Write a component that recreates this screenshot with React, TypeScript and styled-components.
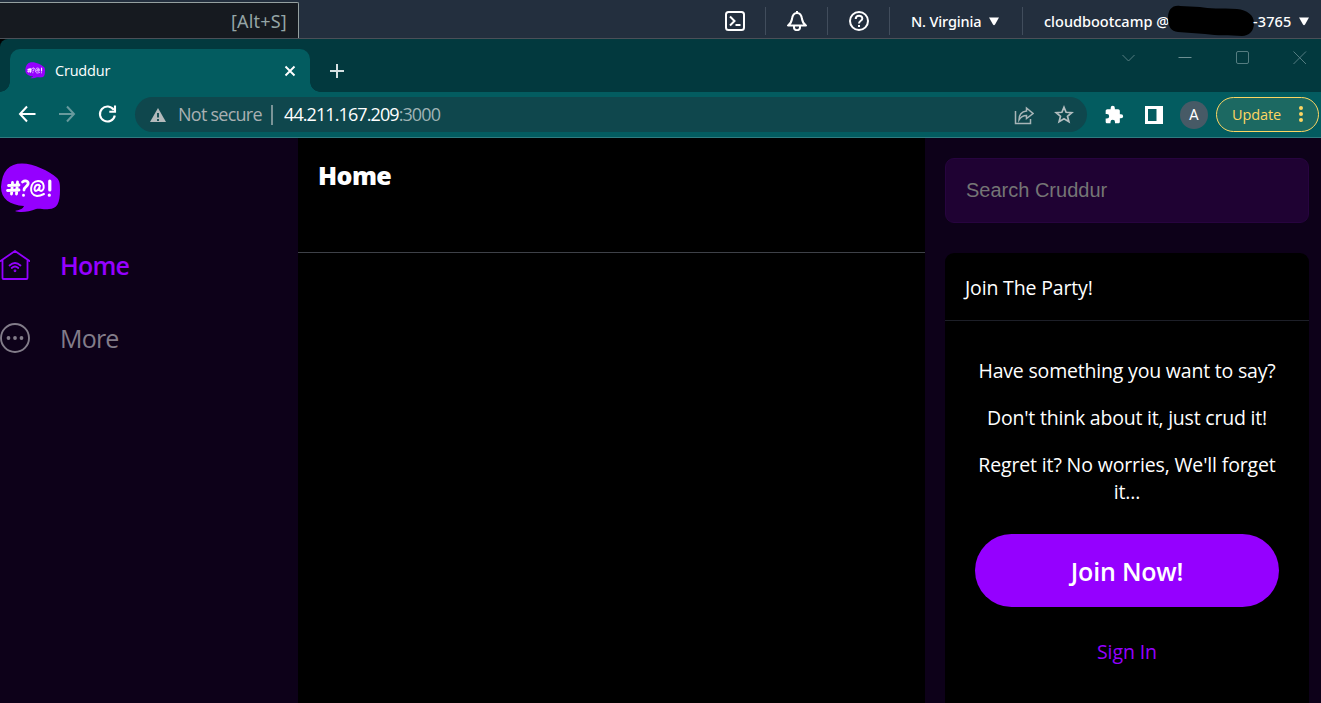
import React from 'react';
import styled, { createGlobalStyle } from 'styled-components';

const GlobalStyle = createGlobalStyle`
  * { box-sizing: border-box; }
  body {
    margin: 0;
    background: #000;
    font-family: 'Open Sans', 'Noto Sans', sans-serif;
    overflow: hidden;
  }
  svg { display: block; flex: none; }
`;

const Screen = styled.div`
  width: 1321px;
  height: 703px;
  display: flex;
  flex-direction: column;
  overflow: hidden;
`;

/* Cloud console bar */
const ConsoleBar = styled.header`
  height: 39px;
  flex: none;
  display: flex;
  align-items: stretch;
  background: #232f3e;
  border-bottom: 1px solid #4b5058;
  color: #fff;
`;

const ConsoleSearch = styled.div`
  width: 299px;
  margin-top: 2px;
  display: flex;
  align-items: center;
  justify-content: flex-end;
  padding: 0 11px 0 0;
  background: #161a20;
  border: solid #95a0a0;
  border-width: 1px 1px 0 0;
  border-top-right-radius: 2px;
  color: #95a5a6;
  font-family: 'Noto Sans', sans-serif;
  font-size: 18px;
  letter-spacing: 0.2px;
`;

const ConsoleIcons = styled.div`
  margin-left: auto;
  display: flex;
  align-items: center;
  padding-top: 4px;
`;

const ConsoleCell = styled.div<{ $w: number; $pad?: number }>`
  width: ${p => p.$w}px;
  height: 28px;
  display: flex;
  align-items: center;
  justify-content: ${p => (p.$pad ? 'flex-start' : 'center')};
  padding-left: ${p => p.$pad ?? 0}px;
  border-right: 1px solid #414d5c;
  font-family: 'Noto Sans', sans-serif;
  font-weight: 500;
  font-size: 14.5px;
  white-space: nowrap;
  &:last-child { border-right: 0; }
`;

const ConsoleLabel = styled.span<{ $w: number; $ls: number }>`
  width: ${p => p.$w}px;
  letter-spacing: ${p => p.$ls}px;
  padding-bottom: 1px;
`;

const Redaction = styled.svg`
  margin: 0 -2px 0 0;
`;

/* Browser window */
const TabStrip = styled.div`
  height: 53px;
  flex: none;
  display: flex;
  align-items: flex-end;
  background: #02393e;
  border-top-left-radius: 8px;
`;

const TabCurve = styled.div<{ $side: 'left' | 'right' }>`
  width: 10px;
  height: 10px;
  background: radial-gradient(circle at ${p => (p.$side === 'left' ? '0 0' : '100% 0')}, transparent 9.5px, #035c60 10px);
`;

const Tab = styled.div`
  width: 300px;
  height: 43px;
  display: flex;
  align-items: center;
  padding: 0 14px 0 15px;
  background: #035c60;
  border-radius: 10px 10px 0 0;
  color: #fff;
`;

const TabTitle = styled.span`
  flex: 1;
  margin-left: 10px;
  font-size: 14.5px;
  letter-spacing: -0.2px;
`;

const NewTab = styled.div`
  height: 43px;
  display: flex;
  align-items: center;
  margin-left: 9px;
`;

const WindowControls = styled.div`
  height: 53px;
  margin-left: auto;
  display: flex;
  gap: 42px;
  padding: 12px 14px 0 0;
`;

const Toolbar = styled.div`
  height: 46px;
  flex: none;
  display: flex;
  align-items: center;
  background: #035c60;
  border-bottom: 1px solid #2f7b80;
`;

const NavButtons = styled.div`
  width: 135px;
  display: flex;
  gap: 20px;
  padding: 0 0 2px 17px;
`;

const AddressBar = styled.div`
  width: 952px;
  height: 35px;
  display: flex;
  align-items: center;
  padding: 0 13px 0 14px;
  border-radius: 18px;
  background: #0f474d;
  font-size: 18px;
  color: #9fb3b5;
`;

const Security = styled.span`
  margin-left: 11px;
  width: 93px;
  padding-bottom: 1px;
  white-space: nowrap;
  letter-spacing: -0.75px;
  color: #a9b0b2;
`;

const Separator = styled.span`
  width: 2px;
  height: 20px;
  background: #7a9497;
  margin-right: 11px;
`;

const Url = styled.span`
  flex: 1;
  padding-bottom: 1px;
  letter-spacing: -0.91px;
`;

const Host = styled.span`
  color: #fff;
`;

const AddressActions = styled.div`
  display: flex;
  gap: 20px;
`;

const Extensions = styled.div`
  display: flex;
  align-items: center;
  margin-left: 17px;
`;

const PanelIcon = styled.svg`
  margin-left: 21px;
`;

const Avatar = styled.div`
  width: 28px;
  height: 28px;
  margin-left: 17px;
  border-radius: 50%;
  background: #475a66;
  color: #fff;
  font: 400 15px Roboto, sans-serif;
  display: flex;
  align-items: center;
  justify-content: center;
`;

const UpdateButton = styled.div`
  width: 103px;
  height: 35px;
  margin-left: 8px;
  padding: 0 15px 1px 15px;
  display: flex;
  align-items: center;
  justify-content: space-between;
  border: 1px solid #fdd663;
  border-radius: 18px;
  background: #1c6962;
  color: #fdd663;
  font-size: 14.5px;
  letter-spacing: -0.1px;
`;

/* Cruddur page */
const Page = styled.div`
  flex: 1;
  display: flex;
  min-height: 0;
`;

const Sidebar = styled.nav`
  width: 298px;
  padding-top: 25px;
  background: #0d0119;
`;

const Logo = styled.svg`
  margin: 0;
`;

const NavList = styled.div`
  padding-top: 35px;
`;

const NavItem = styled.a<{ $active?: boolean; $ls: number }>`
  display: flex;
  align-items: center;
  gap: 30px;
  height: 34px;
  margin-bottom: 39px;
  color: ${p => (p.$active ? '#9500ff' : '#827c89')};
  font-size: 25px;
  font-weight: ${p => (p.$active ? 600 : 400)};
  letter-spacing: ${p => p.$ls}px;
`;

const Feed = styled.main`
  width: 627px;
  background: #000;
`;

const FeedHeader = styled.div`
  height: 115px;
  padding: 19px 20px;
  border-bottom: 1px solid #3e4148;
  color: #fff;
  font-size: 25px;
  font-weight: 800;
  line-height: 36px;
  letter-spacing: -0.6px;
`;

const Aside = styled.section`
  width: 396px;
  padding: 20px 12px 0 20px;
  background: #0d0119;
  display: flex;
  flex-direction: column;
`;

const SearchBox = styled.input`
  width: 364px;
  height: 65px;
  flex: none;
  padding: 0 20px;
  border: 1px solid #27043f;
  border-radius: 9px;
  background: #1f0233;
  color: #fff;
  font: 20px 'Liberation Sans', Arial, sans-serif;
  outline: none;
  &::placeholder { color: #757575; opacity: 1; }
`;

const Card = styled.div`
  flex: 1;
  margin-top: 30px;
  border-radius: 9px 9px 0 0;
  background: #000;
  color: #fff;
  font-size: 19.5px;
`;

const CardHeader = styled.div`
  height: 68px;
  padding: 0 20px;
  line-height: 70px;
  border-bottom: 1px solid #1d1f28;
  letter-spacing: -0.16px;
`;

const CardBody = styled.div`
  padding: 36px 30px 0;
  text-align: center;
`;

const Line = styled.p<{ $ls: number }>`
  margin: 0 -10px 20px;
  line-height: 27px;
  letter-spacing: ${p => p.$ls}px;
`;

const JoinButton = styled.button`
  display: block;
  width: 304px;
  height: 73px;
  margin: 29px 0 31px;
  padding: 1px 0 0;
  border: 0;
  border-radius: 37px;
  background: #9500ff;
  color: #fff;
  font: 600 25px 'Open Sans', sans-serif;
  letter-spacing: -0.2px;
`;

const SignIn = styled.a`
  color: #9500ff;
  line-height: 27px;
  letter-spacing: -0.1px;
`;

const LogoMark = ({ size }: { size: number }) => (
  <Logo width={size} height={(size * 50) / 60} viewBox="0 0 60 50">
    <path
      d="M1 24C2 8 9 0.500 22 0.500C34 0.500 49 8 57 15C60 18 60 22 60 27C60 40 57 46 49 46C44 47 40 45 36 46C29 49 20 50 15 48C19 47 23 46 24 43C10 42 1 36 1 24Z"
      fill="#9500ff"
    />
    <g stroke="#fff" strokeWidth="2.800" fill="none" strokeLinecap="round" strokeLinejoin="round">
      <path d="M12.500 19.500L11.500 31M17.500 19L16.500 31M8.500 22.500L19 22M7.500 27.500L19 27" />
      <path d="M22.500 19C25 17 29 18 28 21C27 24 24 24 24 27M23.500 32.200V32.400" />
      <path d="M49.800 18V27M49.300 32V32.200" strokeWidth="3.200" />
    </g>
    <path
      d="M39 22C35 20 33 28 36 28C38 28 40 24 40 22C39 26 39 28 41 28C45 27 45 18 38 18C30 18 28 32 37 33C40 33 42 32 44 31"
      stroke="#fff"
      strokeWidth="2"
      fill="none"
      strokeLinecap="round"
    />
  </Logo>
);

const Caret = () => (
  <svg width="10" height="9" viewBox="0 0 10 9"><path d="M0 0.500H10L6 7.500Q5 9 4 7.500Z" fill="#fff" /></svg>
);

export default function App() {
  return (
    <Screen>
      <GlobalStyle />
      <ConsoleBar>
        <ConsoleSearch>[Alt+S]</ConsoleSearch>
        <ConsoleIcons>
          <ConsoleCell $w={62}>
            <svg width="20" height="20" viewBox="0 0 20 20" fill="none" stroke="#fff" strokeWidth="2">
              <rect x="1" y="1" width="18" height="18" rx="2.500" />
              <path d="M5 5.500L9.500 10L5 14.500M10.500 14H15.500" />
            </svg>
          </ConsoleCell>
          <ConsoleCell $w={62}>
            <svg width="20" height="20" viewBox="0 0 20 20" fill="none" stroke="#fff" strokeWidth="2">
              <path d="M10 0V2M1 14.500H19C16 12.500 15.500 11 15 8C14.500 4 13 2 10 2C7 2 5.500 4 5 8C4.500 11 4 12.500 1 14.500Z" strokeLinejoin="round" />
              <path d="M7 15V16.500C7 20 13 20 13 16.500V15" />
            </svg>
          </ConsoleCell>
          <ConsoleCell $w={62}>
            <svg width="20" height="20" viewBox="0 0 20 20" fill="none" stroke="#fff" strokeWidth="2">
              <circle cx="10" cy="10" r="9" />
              <path d="M6.700 8C6.700 3.500 13.300 3.700 13.300 7.500C13.300 10 10 9.500 10 12.500M10 14V16" />
            </svg>
          </ConsoleCell>
          <ConsoleCell $w={133} $pad={21}>
            <ConsoleLabel $w={78} $ls={-0.15}>N. Virginia</ConsoleLabel>
            <Caret />
          </ConsoleCell>
          <ConsoleCell $w={298} $pad={21}>
            <ConsoleLabel $w={124} $ls={0}>cloudbootcamp @</ConsoleLabel>
            <Redaction width="87" height="32" viewBox="0 0 87 32">
              <path d="M0 13C0 5 4 0 12 1L32 2C41 4 53 3 69 4C79 5 86 10 86 18C86 26 81 31 74 31C61 30 50 31 37 29L10 27C3 26 0 22 0 13Z" fill="#000" />
            </Redaction>
            <ConsoleLabel $w={46} $ls={0.1}>-3765</ConsoleLabel>
            <Caret />
          </ConsoleCell>
        </ConsoleIcons>
      </ConsoleBar>

      <TabStrip>
        <TabCurve $side="left" />
        <Tab>
          <LogoMark size={20} />
          <TabTitle>Cruddur</TabTitle>
          <svg width="12" height="12" viewBox="0 0 12 12" stroke="#fff" strokeWidth="1.900"><path d="M1.500 1.500L10.500 10.500M10.500 1.500L1.500 10.500" /></svg>
        </Tab>
        <TabCurve $side="right" />
        <NewTab>
          <svg width="16" height="16" viewBox="0 0 16 16" stroke="#d5e0e1" strokeWidth="2"><path d="M8 1V15M1 8H15" /></svg>
        </NewTab>
        <WindowControls>
          <svg width="15" height="15" viewBox="0 0 15 15" fill="none" stroke="#557d81"><path d="M1.500 4L7.500 10L13.500 4" /></svg>
          <svg width="15" height="15" viewBox="0 0 15 15" fill="none" stroke="#6d8f92"><path d="M0.500 6.500H13.500" /></svg>
          <svg width="15" height="15" viewBox="0 0 15 15" fill="none" stroke="#557d81"><rect x="1.500" y="0.500" width="12" height="12" rx="1.500" /></svg>
          <svg width="15" height="15" viewBox="0 0 15 15" fill="none" stroke="#557d81"><path d="M1.500 0.500L14 13M14 0.500L1.500 13" /></svg>
        </WindowControls>
      </TabStrip>

      <Toolbar>
        <NavButtons>
          <svg width="20" height="20" viewBox="0 0 20 20" fill="none" stroke="#fff" strokeWidth="2"><path d="M18.500 10H3M10 2.500L3 10L10 17.500" /></svg>
          <svg width="20" height="20" viewBox="0 0 20 20" fill="none" stroke="#689a9d" strokeWidth="2"><path d="M2 10H17M10 2.500L17 10L10 17.500" /></svg>
          <svg width="20" height="20" viewBox="0 0 20 20" fill="none" stroke="#fff" strokeWidth="2.100"><path d="M16.800 6A7.500 7.500 0 1 0 17.800 11.500M12.300 7.800H18V1.500" /></svg>
        </NavButtons>
        <AddressBar>
          <svg width="18" height="18" viewBox="0 0 18 18"><path d="M9 2L17 16H1Z" fill="#b4babc" /><path d="M9 7V11.500M9 13V15" stroke="#0f474d" strokeWidth="1.800" /></svg>
          <Security>Not secure</Security>
          <Separator />
          <Url><Host>44.211.167.209</Host>:3000</Url>
          <AddressActions>
            <svg width="20" height="20" viewBox="0 0 20 20" fill="none" stroke="#a7b5b7" strokeWidth="1.500">
              <path d="M1.500 6V18.500H16.500V14M12.500 3L19 8.500L12.500 13.500V10.500C9 10.500 7 11.500 5 15C5 9 8 6.500 12.500 6Z" />
            </svg>
            <svg width="20" height="20" viewBox="0 0 20 20" fill="none" stroke="#b3bec0" strokeWidth="1.700">
              <path d="M10 2.300L12.100 7.300L17.800 7.700L13.500 11.300L14.900 16.800L10 13.800L5.100 16.800L6.500 11.300L2.200 7.700L7.900 7.300Z" />
            </svg>
          </AddressActions>
        </AddressBar>
        <Extensions>
          <svg width="20" height="20" viewBox="0 0 24 24"><path d="M20.500 11H19V7c0-1.100-.9-2-2-2h-4V3.500a2.500 2.500 0 0 0-5 0V5H4c-1.100 0-2 .9-2 2v3.800h1.500a2.700 2.700 0 0 1 0 5.400H2V20c0 1.100.9 2 2 2h3.800v-1.500a2.700 2.700 0 0 1 5.400 0V22H17c1.100 0 2-.9 2-2v-4h1.500a2.500 2.500 0 0 0 0-5Z" fill="#fff" /></svg>
          <PanelIcon width="18" height="18" viewBox="0 0 18 18"><path fillRule="evenodd" d="M0 0H18V18H0ZM3 3V15H11.500V3Z" fill="#fff" /></PanelIcon>
          <Avatar>A</Avatar>
          <UpdateButton>
            Update
            <svg width="4" height="18" viewBox="0 0 4 18" fill="#fdd663"><circle cx="2" cy="3" r="2" /><circle cx="2" cy="9" r="2" /><circle cx="2" cy="15" r="2" /></svg>
          </UpdateButton>
        </Extensions>
      </Toolbar>

      <Page>
        <Sidebar>
          <LogoMark size={60} />
          <NavList>
            <NavItem $active $ls={-0.8}>
              <svg width="30" height="30" viewBox="0 0 30 30" fill="none" stroke="#9500ff" strokeWidth="1.800" strokeLinecap="round">
                <path d="M0.500 11L15 1L29.500 11M2.500 10V28Q2.500 29 3.500 29H26.500Q27.500 29 27.500 28V10" />
                <path d="M9.500 15.500Q15 10.500 20.500 15.500M11.700 18Q15 15 18.300 18" />
                <circle cx="15" cy="20.800" r="0.500" />
              </svg>
              Home
            </NavItem>
            <NavItem $ls={-0.8}>
              <svg width="30" height="30" viewBox="0 0 30 30" fill="#827c89">
                <circle cx="15" cy="15" r="14" fill="none" stroke="#827c89" strokeWidth="1.900" />
                <circle cx="8.500" cy="15" r="1.900" /><circle cx="15" cy="15" r="1.900" /><circle cx="21.500" cy="15" r="1.900" />
              </svg>
              More
            </NavItem>
          </NavList>
        </Sidebar>
        <Feed>
          <FeedHeader>Home</FeedHeader>
        </Feed>
        <Aside>
          <SearchBox placeholder="Search Cruddur" />
          <Card>
            <CardHeader>Join The Party!</CardHeader>
            <CardBody>
              <Line $ls={-0.19}>Have something you want to say?</Line>
              <Line $ls={-0.21}>Don't think about it, just crud it!</Line>
              <Line $ls={-0.14}>Regret it? No worries, We'll forget<br />it...</Line>
              <JoinButton>Join Now!</JoinButton>
              <SignIn>Sign In</SignIn>
            </CardBody>
          </Card>
        </Aside>
      </Page>
    </Screen>
  );
}
